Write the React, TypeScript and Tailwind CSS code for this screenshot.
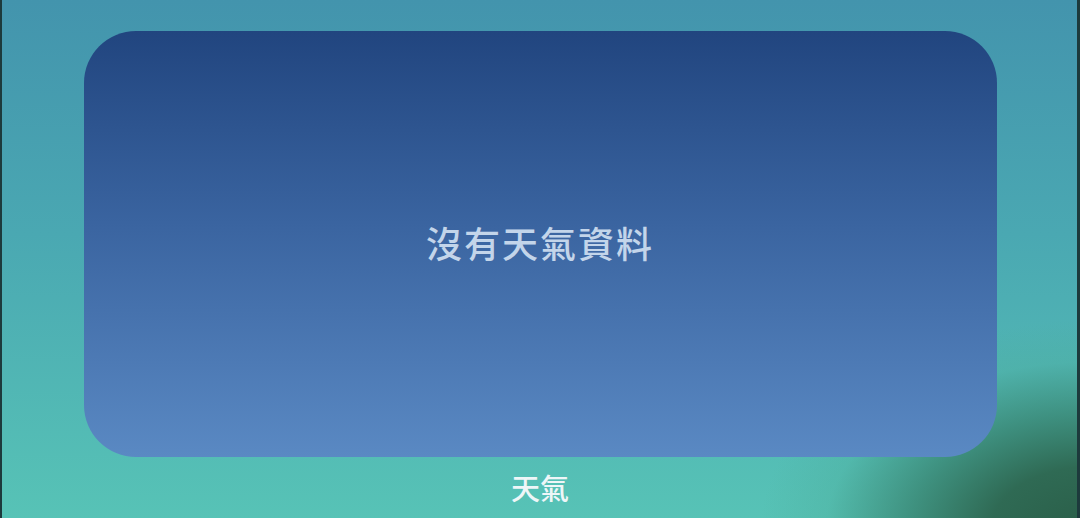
export default function App() {
  return (
    <div
      className="relative w-[1080px] h-[518px] overflow-hidden bg-[linear-gradient(180deg,#4394ad_0%,#4aa8b2_45%,#57c3b6_100%)] flex flex-col items-center"
      style={{ fontFamily: '"Noto Sans CJK TC", "Noto Sans", sans-serif' }}
    >
      <div className="absolute inset-0 bg-[radial-gradient(ellipse_330px_210px_at_1090px_530px,#2a5e48_0%,#2f6a54_30%,rgba(55,130,110,0.75)_55%,rgba(75,170,150,0.3)_80%,rgba(85,190,175,0)_100%)]" />
      <div className="absolute left-0 top-0 bottom-0 w-[2px] bg-[#1d3a3c]" />
      <div className="absolute right-0 top-0 bottom-0 w-[3px] bg-[#1d3a3c]" />
      <div className="relative mt-[31px] w-[913px] h-[426px] rounded-[52px] bg-[linear-gradient(180deg,#21457f_0%,#3a64a0_45%,#5a89c3_100%)] flex items-center justify-center">
        <span className="text-[36px] font-medium text-[#c3d5ea] tracking-[2px] -mt-[4px]">沒有天氣資料</span>
      </div>
      <div className="relative mt-[12px] text-[29px] font-medium text-[#eef6f8] leading-[36px]">天氣</div>
    </div>
  );
}
